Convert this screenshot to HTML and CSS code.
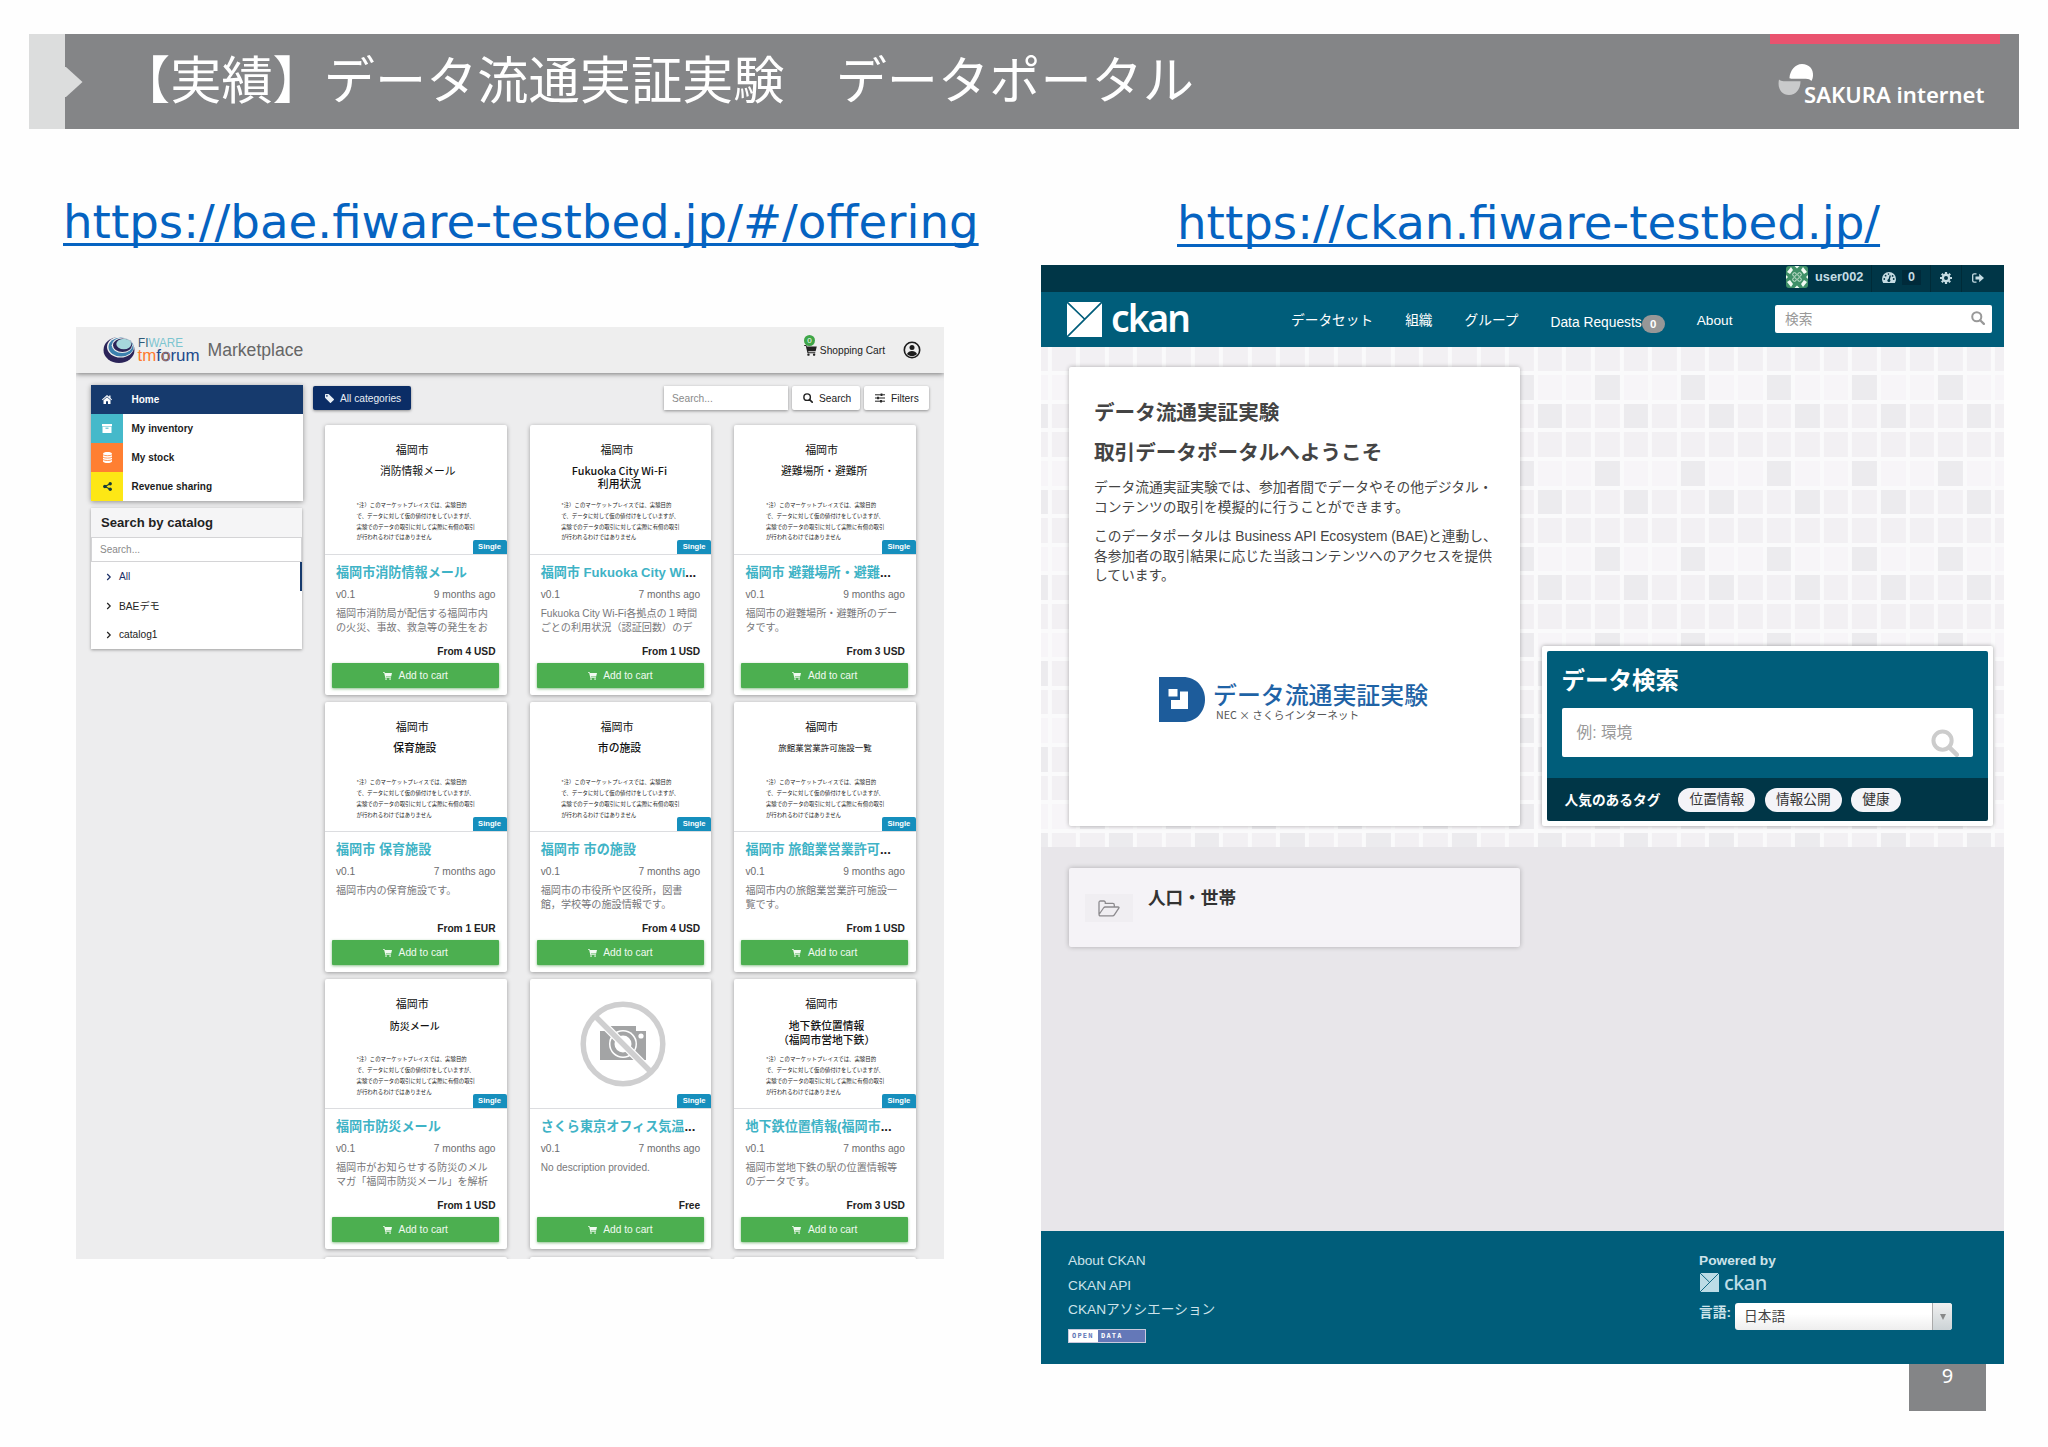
FILE: index.html
```html
<!DOCTYPE html>
<html lang="en">

<head>
    <meta charset="UTF-8" />
    <meta name="viewport" content="width=device-width, initial-scale=1" />
    <title>データ流通実証実験 データポータル</title>
    <link rel="stylesheet" href="styles.css">
</head>

<body>
    <!-- Shared icons -->
    <svg class="sprite" width="0" height="0">
        <symbol id="i-cart" viewBox="0 0 16 14">
            <path d="M0 0h2.8l.5 1.8H16l-1.5 6H5.1l.3 1.3h8.7v1.3H4.2L2 1.3H0z" fill="currentColor" />
            <circle cx="5.4" cy="12.3" r="1.5" fill="currentColor" />
            <circle cx="12.6" cy="12.3" r="1.5" fill="currentColor" />
        </symbol>
        <symbol id="i-search" viewBox="0 0 16 16">
            <circle cx="6.6" cy="6.6" r="5.2" fill="none" stroke="currentColor" stroke-width="2.3" />
            <path d="M10.5 10.5l4.2 4.2" stroke="currentColor" stroke-width="2.6" stroke-linecap="round" />
        </symbol>
        <symbol id="i-chevron" viewBox="0 0 6 8">
            <path d="M1.2 1l3 3-3 3" fill="none" stroke="currentColor" stroke-width="1.2" />
        </symbol>
        <symbol id="i-ckan" viewBox="0 0 36 36">
            <path d="M0 0h36v36H0z" fill="currentColor" />
            <path d="M0 0l18 17.500M36 0L0 36" fill="none" stroke="#005d7a" stroke-width="1.700" />
        </symbol>
    </svg>

    <header class="slide-header">
        <div class="tab"></div>
        <svg class="arrow" width="18" height="30" viewBox="0 0 18 30"><path d="M0 0h1l16.500 15L1 30H0z" fill="#dcdddd" /></svg>
        <h1>【実績】データ流通実証実験　データポータル</h1>
        <div class="brand">
            <div class="brand-bar"></div>
            <div class="brand-logo">
                <svg width="36" height="33" viewBox="0 0 36 33">
                    <path d="M11.500 13.500C12 7 17 0 24 0c7 0 11.500 5 11 11.500-.1 2-.6 4-1.600 5.500-1.500-1.600-3-2.300-5.500-2.300H13c-1 0-1.600-.4-1.500-1.200z" fill="#fff" />
                    <path d="M1 15.500c1.300 1.300 2.700 1.700 4.500 1.700h17C22.500 25 18 31 11 31 4 31-1 25 1 15.500z" fill="#c9cacb" />
                </svg>
                <span>SAKURA internet</span>
            </div>
        </div>
    </header>

    <main class="slide-body">
        <section class="col-left">
            <a class="url" href="#">https://bae.fiware-testbed.jp/#/offering</a>

            <div class="market">
                <header class="market-header">
                    <svg class="market-logo" width="98" height="28" viewBox="0 0 98 28">
                        <ellipse cx="16" cy="14" rx="15.500" ry="13" fill="#2b2459" />
                        <ellipse cx="17.500" cy="11" rx="13.500" ry="10.500" fill="#eee" />
                        <ellipse cx="18" cy="11" rx="12.500" ry="9.500" fill="#3c80ae" />
                        <ellipse cx="19.200" cy="9.300" rx="10.500" ry="7.600" fill="#eee" />
                        <ellipse cx="19.500" cy="9.300" rx="9.500" ry="6.700" fill="#2b2459" />
                        <ellipse cx="20.800" cy="8" rx="7.500" ry="5.200" fill="#a6d8dc" />
                        <text x="35" y="10.500" font-size="13" textLength="45" lengthAdjust="spacingAndGlyphs"><tspan fill="#2d5b7a">FI</tspan><tspan fill="#7cc5d0">WARE</tspan></text>
                        <text x="34.500" y="25" font-size="16.500" textLength="62" lengthAdjust="spacingAndGlyphs"><tspan fill="#ff7a2f">tm</tspan><tspan fill="#214a8c">f</tspan><tspan fill="#ff7a2f" stroke="#214a8c" stroke-width=".6">o</tspan><tspan fill="#214a8c">rum</tspan></text>
                    </svg>
                    <span class="market-name">Marketplace</span>
                    <span class="cart-link">
                        <svg width="13" height="11"><use href="#i-cart" /></svg>
                        <i>0</i>
                        Shopping Cart
                    </span>
                    <svg class="user" width="18" height="18" viewBox="0 0 18 18">
                        <circle cx="9" cy="9" r="7.700" fill="none" stroke="#1c1c1c" stroke-width="1.600" />
                        <circle cx="9" cy="6.600" r="2.500" fill="#1c1c1c" />
                        <path d="M4 13c.8-2 2.800-3 5-3s4.200 1 5 3c-1.300 1.400-3 2.200-5 2.200S5.300 14.400 4 13z" fill="#1c1c1c" />
                    </svg>
                </header>

                <div class="market-body">
                    <aside class="side">
                        <ul class="menu">
                            <li class="active"><span class="ic"><svg width="10" height="9" viewBox="0 0 10 9"><path d="M5 0L0 4.500l.6.700L5 1.400l4.400 3.800.6-.7L8.500 3V.6H7.200v1.200zM1.500 5.300V9H4V6.300h2V9h2.500V5.300L5 2.300z" fill="currentColor" /></svg></span>Home</li>
                            <li><span class="ic teal"><svg width="10" height="9" viewBox="0 0 10 9"><path d="M0 0h10v2.200H0zM.5 2.800h9V9h-9z" fill="currentColor" /><path d="M3.500 4.200h3" stroke="#45b9ca" /></svg></span>My inventory</li>
                            <li><span class="ic orange"><svg width="9" height="11" viewBox="0 0 9 11"><path d="M0 1.500C0 .6 2 0 4.500 0S9 .6 9 1.500v8c0 .9-2 1.500-4.500 1.500S0 10.400 0 9.500z" fill="currentColor" /><path d="M0 2.800c1.500 1.200 7.500 1.200 9 0M0 5.200c1.500 1.200 7.500 1.200 9 0M0 7.600c1.500 1.200 7.500 1.200 9 0" fill="none" stroke="#ff7f32" stroke-width=".8" /></svg></span>My stock</li>
                            <li><span class="ic yellow"><svg width="9" height="9" viewBox="0 0 9 9"><path d="M7.200 1.800L2 4.500l5.200 2.700" fill="none" stroke="currentColor" stroke-width="1.100" /><circle cx="7.200" cy="1.800" r="1.700" fill="currentColor" /><circle cx="1.900" cy="4.500" r="1.800" fill="currentColor" /><circle cx="7.200" cy="7.200" r="1.700" fill="currentColor" /></svg></span>Revenue sharing</li>
                        </ul>
                        <div class="catalog">
                            <h2>Search by catalog</h2>
                            <div class="catalog-search">Search...</div>
                            <ul>
                                <li class="active"><svg width="6" height="8"><use href="#i-chevron" /></svg>All</li>
                                <li><svg width="6" height="8"><use href="#i-chevron" /></svg>BAEデモ</li>
                                <li><svg width="6" height="8"><use href="#i-chevron" /></svg>catalog1</li>
                            </ul>
                        </div>
                    </aside>

                    <div class="offers">
                        <div class="toolbar">
                            <span class="btn-cat"><svg width="9" height="9" viewBox="0 0 9 9"><path d="M0 .6C0 .2.2 0 .6 0h3l5.200 5c.3.300.3.600 0 .900L5.900 8.800c-.3.300-.6.300-.9 0L0 3.700z" fill="currentColor" /><circle cx="1.900" cy="1.900" r=".8" fill="#0b2d66" /></svg>All categories</span>
                            <span class="field">Search...</span>
                            <span class="btn"><svg width="10" height="10"><use href="#i-search" /></svg>Search</span>
                            <span class="btn filters"><svg width="10" height="10" viewBox="0 0 10 10"><path d="M0 1.800h10M0 5h10M0 8.200h10" stroke="currentColor" /><path d="M6.500.5v2.600M3 3.700v2.600M6 6.900v2.600" stroke="currentColor" stroke-width="1.800" /></svg>Filters</span>
                        </div>

                        <div class="cards">
                            <article class="card">
                                <div class="thumb"><p class="city">福岡市</p><p class="name off">消防情報メール</p><p class="note">*注）このマーケットプレイスでは、実験目的<br>で、データに対して仮の値付けをしていますが、<br>実験でのデータの取引に対して実際に有償の取引<br>が行われるわけではありません</p><b class="tag">Single</b></div>
                                <h3><a>福岡市消防情報メール</a></h3>
                                <div class="meta"><span>v0.1</span><span>9 months ago</span></div>
                                <p class="desc">福岡市消防局が配信する福岡市内<br>の火災、事故、救急等の発生をお</p>
                                <p class="price">From 4 USD</p>
                                <div class="add"><svg width="9" height="8"><use href="#i-cart" /></svg>Add to cart</div>
                            </article>
                            <article class="card">
                                <div class="thumb"><p class="city">福岡市</p><p class="name bold">Fukuoka City Wi-Fi<br>利用状況</p><p class="note">*注）このマーケットプレイスでは、実験目的<br>で、データに対して仮の値付けをしていますが、<br>実験でのデータの取引に対して実際に有償の取引<br>が行われるわけではありません</p><b class="tag">Single</b></div>
                                <h3><a>福岡市 Fukuoka City Wi</a>...</h3>
                                <div class="meta"><span>v0.1</span><span>7 months ago</span></div>
                                <p class="desc">Fukuoka City Wi-Fi各拠点の１時間<br>ごとの利用状況（認証回数）のデ</p>
                                <p class="price">From 1 USD</p>
                                <div class="add"><svg width="9" height="8"><use href="#i-cart" /></svg>Add to cart</div>
                            </article>
                            <article class="card">
                                <div class="thumb"><p class="city">福岡市</p><p class="name">避難場所・避難所</p><p class="note">*注）このマーケットプレイスでは、実験目的<br>で、データに対して仮の値付けをしていますが、<br>実験でのデータの取引に対して実際に有償の取引<br>が行われるわけではありません</p><b class="tag">Single</b></div>
                                <h3><a>福岡市 避難場所・避難</a>...</h3>
                                <div class="meta"><span>v0.1</span><span>9 months ago</span></div>
                                <p class="desc">福岡市の避難場所・避難所のデー<br>タです。</p>
                                <p class="price">From 3 USD</p>
                                <div class="add"><svg width="9" height="8"><use href="#i-cart" /></svg>Add to cart</div>
                            </article>

                            <article class="card">
                                <div class="thumb"><p class="city">福岡市</p><p class="name bold">保育施設</p><p class="note">*注）このマーケットプレイスでは、実験目的<br>で、データに対して仮の値付けをしていますが、<br>実験でのデータの取引に対して実際に有償の取引<br>が行われるわけではありません</p><b class="tag">Single</b></div>
                                <h3><a>福岡市 保育施設</a></h3>
                                <div class="meta"><span>v0.1</span><span>7 months ago</span></div>
                                <p class="desc">福岡市内の保育施設です。</p>
                                <p class="price">From 1 EUR</p>
                                <div class="add"><svg width="9" height="8"><use href="#i-cart" /></svg>Add to cart</div>
                            </article>
                            <article class="card">
                                <div class="thumb"><p class="city">福岡市</p><p class="name bold">市の施設</p><p class="note">*注）このマーケットプレイスでは、実験目的<br>で、データに対して仮の値付けをしていますが、<br>実験でのデータの取引に対して実際に有償の取引<br>が行われるわけではありません</p><b class="tag">Single</b></div>
                                <h3><a>福岡市 市の施設</a></h3>
                                <div class="meta"><span>v0.1</span><span>7 months ago</span></div>
                                <p class="desc">福岡市の市役所や区役所，図書<br>館，学校等の施設情報です。</p>
                                <p class="price">From 4 USD</p>
                                <div class="add"><svg width="9" height="8"><use href="#i-cart" /></svg>Add to cart</div>
                            </article>
                            <article class="card">
                                <div class="thumb"><p class="city">福岡市</p><p class="name small">旅館業営業許可施設一覧</p><p class="note">*注）このマーケットプレイスでは、実験目的<br>で、データに対して仮の値付けをしていますが、<br>実験でのデータの取引に対して実際に有償の取引<br>が行われるわけではありません</p><b class="tag">Single</b></div>
                                <h3><a>福岡市 旅館業営業許可</a>...</h3>
                                <div class="meta"><span>v0.1</span><span>9 months ago</span></div>
                                <p class="desc">福岡市内の旅館業営業許可施設一<br>覧です。</p>
                                <p class="price">From 1 USD</p>
                                <div class="add"><svg width="9" height="8"><use href="#i-cart" /></svg>Add to cart</div>
                            </article>

                            <article class="card">
                                <div class="thumb"><p class="city">福岡市</p><p class="name medium">防災メール</p><p class="note">*注）このマーケットプレイスでは、実験目的<br>で、データに対して仮の値付けをしていますが、<br>実験でのデータの取引に対して実際に有償の取引<br>が行われるわけではありません</p><b class="tag">Single</b></div>
                                <h3><a>福岡市防災メール</a></h3>
                                <div class="meta"><span>v0.1</span><span>7 months ago</span></div>
                                <p class="desc">福岡市がお知らせする防災のメル<br>マガ「福岡市防災メール」を解析</p>
                                <p class="price">From 1 USD</p>
                                <div class="add"><svg width="9" height="8"><use href="#i-cart" /></svg>Add to cart</div>
                            </article>
                            <article class="card">
                                <div class="thumb noimg">
                                    <svg width="86" height="86" viewBox="0 0 86 86">
                                        <path d="M20 30h7V25h20l2 0h7v5h10v29H20z" fill="#a3a4a5" />
                                        <circle cx="61" cy="35" r="2.600" fill="#fff" />
                                        <circle cx="43" cy="43" r="14" fill="#fff" />
                                        <circle cx="43" cy="43" r="10.500" fill="none" stroke="#a3a4a5" stroke-width="4" />
                                        <path d="M15 15l56 56" stroke="#fff" stroke-width="8" />
                                        <path d="M15 15l56 56" stroke="#cfcfd0" stroke-width="5.500" />
                                        <circle cx="43" cy="43" r="39.800" fill="none" stroke="#cfcfd0" stroke-width="5.500" />
                                    </svg>
                                    <b class="tag">Single</b>
                                </div>
                                <h3><a>さくら東京オフィス気温</a>...</h3>
                                <div class="meta"><span>v0.1</span><span>7 months ago</span></div>
                                <p class="desc">No description provided.</p>
                                <p class="price">Free</p>
                                <div class="add"><svg width="9" height="8"><use href="#i-cart" /></svg>Add to cart</div>
                            </article>
                            <article class="card">
                                <div class="thumb"><p class="city">福岡市</p><p class="name bold two">地下鉄位置情報<br>（福岡市営地下鉄）</p><p class="note">*注）このマーケットプレイスでは、実験目的<br>で、データに対して仮の値付けをしていますが、<br>実験でのデータの取引に対して実際に有償の取引<br>が行われるわけではありません</p><b class="tag">Single</b></div>
                                <h3><a>地下鉄位置情報(福岡市</a>...</h3>
                                <div class="meta"><span>v0.1</span><span>7 months ago</span></div>
                                <p class="desc">福岡市営地下鉄の駅の位置情報等<br>のデータです。</p>
                                <p class="price">From 3 USD</p>
                                <div class="add"><svg width="9" height="8"><use href="#i-cart" /></svg>Add to cart</div>
                            </article>

                            <div class="card"></div>
                            <div class="card"></div>
                            <div class="card"></div>
                        </div>
                    </div>
                </div>
            </div>
        </section>

        <section class="col-right">
            <a class="url" href="#">https://ckan.fiware-testbed.jp/</a>

            <div class="ckan">
                <div class="account">
                    <svg class="avatar" width="22" height="22" viewBox="0 0 22 22">
                        <rect width="22" height="22" rx="3" fill="#3f9068" />
                        <path d="M1 6l4-5 2 3-3 4zM21 6l-4-5-2 3 3 4zM1 16l4 5 2-3-3-4zM21 16l-4 5-2-3 3-4zM8.500 0h5L11 2.500zM8.500 22h5L11 19.500zM0 9l2 2-2 2zM22 9l-2 2 2 2z" fill="#f2fbf4" />
                        <g fill="none" stroke="#cfe8d6"><circle cx="8.500" cy="8.500" r="1.800" /><circle cx="13.500" cy="8.500" r="1.800" /><circle cx="8.500" cy="13.500" r="1.800" /><circle cx="13.500" cy="13.500" r="1.800" /></g>
                    </svg>
                    <b class="username">user002</b>
                    <span class="acc dash">
                        <svg width="14" height="11" viewBox="0 0 14 11"><path d="M0 7a7 7 0 0 1 14 0c0 1.500-.4 2.800-1.200 4H1.200C.4 9.800 0 8.500 0 7z" fill="currentColor" /><path d="M6.800 8.500L8.300 3.500" stroke="#003647" stroke-width="1.300" /><g fill="#003647"><circle cx="2.300" cy="7" r=".9" /><circle cx="3.600" cy="3.700" r=".9" /><circle cx="6.500" cy="2.100" r=".8" /><circle cx="10.600" cy="3.900" r=".9" /><circle cx="11.700" cy="7" r=".9" /><circle cx="6.900" cy="8.500" r="1.500" /></g></svg>
                        <b>0</b>
                    </span>
                    <span class="acc"><svg width="12" height="12" viewBox="0 0 12 12"><circle cx="6" cy="6" r="3.200" fill="none" stroke="currentColor" stroke-width="2.400" /><path d="M6 0v2M6 10v2M0 6h2M10 6h2M1.800 1.800l1.400 1.400M8.800 8.800l1.400 1.400M1.800 10.200l1.400-1.400M8.800 3.200l1.400-1.400" stroke="currentColor" stroke-width="2.200" /></svg></span>
                    <span class="acc out"><svg width="12" height="10" viewBox="0 0 12 10"><path d="M4.500.8H2.200C1.300.8.700 1.400.7 2.200v5.600c0 .8.6 1.400 1.500 1.400h2.300" fill="none" stroke="currentColor" stroke-width="1.300" /><path d="M3.500 3.400h3.700V.8L12 5 7.200 9.200V6.600H3.500z" fill="currentColor" /></svg></span>
                </div>

                <nav class="masthead">
                    <svg class="mark" width="35" height="35"><use href="#i-ckan" /></svg>
                    <span class="wordmark">ckan</span>
                    <ul>
                        <li>データセット</li>
                        <li>組織</li>
                        <li>グループ</li>
                        <li class="req">Data Requests<b>0</b></li>
                        <li>About</li>
                    </ul>
                    <div class="site-search">検索<svg width="14" height="14"><use href="#i-search" /></svg></div>
                </nav>

                <div class="hero">
                    <div class="welcome">
                        <h2>データ流通実証実験</h2>
                        <h2>取引データポータルへようこそ</h2>
                        <p>データ流通実証実験では、参加者間でデータやその他デジタル・<br>コンテンツの取引を模擬的に行うことができます。</p>
                        <p>このデータポータルは Business API Ecosystem (BAE)と連動し、<br>各参加者の取引結果に応じた当該コンテンツへのアクセスを提供<br>しています。</p>
                        <div class="project">
                            <svg width="46" height="45" viewBox="0 0 46 45">
                                <path d="M0 0h24c13 0 22 10 22 22.500S37 45 24 45H0z" fill="#1d5c9b" />
                                <path d="M9.500 12h9v7.500h-9zM21 14.500h8V32H12V23h9z" fill="#fff" />
                            </svg>
                            <div>
                                <strong>データ流通実証実験</strong>
                                <small>NEC × さくらインターネット</small>
                            </div>
                        </div>
                    </div>
                    <div class="data-search">
                        <div class="top">
                            <h3>データ検索</h3>
                            <div class="big-field">例: 環境<svg width="28" height="28"><use href="#i-search" /></svg></div>
                        </div>
                        <div class="tags"><b>人気のあるタグ</b><span>位置情報</span><span>情報公開</span><span>健康</span></div>
                    </div>
                </div>

                <div class="groups">
                    <div class="group">
                        <span class="folder"><svg width="22" height="17" viewBox="0 0 22 17"><path d="M1 14V2.500C1 1.600 1.600 1 2.500 1h3.300c.9 0 1.500.6 1.500 1.500v.9h7.500c.9 0 1.500.6 1.500 1.500V7M1 14.500L5.500 8c.5-.7 1-1 1.800-1H20c1 0 1.300.5.8 1.200l-4.300 6.400c-.5.800-1.100 1.200-2 1.200H2.300C1.500 15.800 1 15.300 1 14.500z" fill="none" stroke="#8c8a8e" stroke-width="1.300" /></svg></span>
                        <b>人口・世帯</b>
                    </div>
                </div>

                <footer class="ckan-footer">
                    <div class="links">
                        <a>About CKAN</a>
                        <a>CKAN API</a>
                        <a>CKANアソシエーション</a>
                        <div class="opendata"><span>OPEN</span><span>DATA</span></div>
                    </div>
                    <div class="powered">
                        <b>Powered by</b>
                        <div class="powered-logo"><svg width="19" height="19"><use href="#i-ckan" /></svg><span>ckan</span></div>
                        <div class="lang"><b>言語:</b><div class="select">日本語<i><svg width="6" height="6" viewBox="0 0 6 6"><path d="M0 0h6L3 6z" fill="#888" /></svg></i></div></div>
                    </div>
                </footer>
            </div>
            <div class="page-no">9</div>
        </section>
    </main>
</body>

</html>
```
FILE: styles.css
```css
* {
    box-sizing: border-box;
    margin: 0;
    padding: 0;
}

body {
    width: 2048px;
    height: 1447px;
    overflow: hidden;
    background: #fefefe;
    color: #222;
    font-family: "Liberation Sans", "Noto Sans CJK JP", sans-serif;
}

ul {
    list-style: none;
}

svg {
    flex-shrink: 0;
}

.sprite {
    position: absolute;
}

/* Slide header */
.slide-header {
    display: flex;
    align-items: center;
    height: 95px;
    margin: 34px 29px 0;
    background: #848587;
}

.tab {
    width: 36px;
    height: 100%;
    background: #dcdddd;
}

.slide-header h1 {
    flex: 1;
    margin-left: 36px;
    padding-bottom: 9px;
    font: 400 51.200px/70px "Noto Sans CJK JP", sans-serif;
    color: #fff;
    white-space: nowrap;
}

.brand {
    align-self: stretch;
    width: 230px;
    margin-right: 19px;
}

.brand-bar {
    height: 10px;
    background: #ea536f;
}

.brand-logo {
    display: flex;
    margin: 20px 0 0 8px;
}

.brand-logo span {
    margin: 16px 0 0 -10px;
    font: 600 22.100px/28px "Noto Sans", sans-serif;
    color: #fff;
    white-space: nowrap;
}

/* Slide body */
.slide-body {
    display: flex;
}

.col-left {
    width: 1041px;
    padding: 61px 0 0 63px;
}

.url {
    display: block;
    height: 70px;
    font: 400 46.700px/64px "DejaVu Sans", sans-serif;
    color: #0563c1;
    text-decoration: underline;
    text-decoration-thickness: 3px;
    text-underline-offset: 5px;
    text-decoration-skip-ink: none;
    white-space: nowrap;
}

/* Marketplace */
.market {
    width: 868px;
    height: 932px;
    margin: 67px 0 0 13px;
    overflow: hidden;
    background: #ededee;
    font-size: 10.200px;
}

.market-header {
    display: flex;
    align-items: center;
    position: relative;
    height: 46px;
    padding: 0 23px 0 27px;
    background: #eee;
    box-shadow: 0 1px 5px rgba(0, 0, 0, .5);
}

.market-name {
    margin-left: 6.500px;
    padding-top: 1px;
    font-size: 17.600px;
    color: #666;
}

.cart-link {
    display: flex;
    align-items: center;
    gap: 3px;
    position: relative;
    margin-left: auto;
}

.cart-link i {
    position: absolute;
    left: 0;
    top: -10px;
    width: 11px;
    height: 11px;
    border-radius: 50%;
    background: #3fa648;
    color: #fff;
    font: 400 8px/11px "Liberation Sans", sans-serif;
    text-align: center;
}

.user {
    margin-left: 18px;
}

.market-body {
    display: flex;
    align-items: flex-start;
    padding: 12px 15px 0 15px;
}

.side {
    width: 212px;
}

.menu {
    background: #fff;
    box-shadow: 0 1px 5px rgba(0, 0, 0, .4);
}

.menu li {
    display: flex;
    align-items: center;
    height: 29px;
    font-weight: bold;
    font-size: 10px;
    color: #1c1c1c;
}

.menu .active {
    background: #163a6d;
    color: #fff;
}

.ic {
    display: flex;
    align-items: center;
    justify-content: center;
    width: 32px;
    height: 29px;
    margin-right: 8.500px;
    color: #fff;
}

.teal {
    background: #45b9ca;
}

.orange {
    background: #ff7f32;
}

.yellow {
    background: #fde715;
    color: #143a3a;
}

.catalog {
    width: 211px;
    margin-top: 7px;
    background: #fff;
    box-shadow: 0 1px 3px rgba(0, 0, 0, .35);
}

.catalog h2 {
    height: 29px;
    padding-left: 10px;
    background: #f5f5f6;
    font-size: 13.100px;
    line-height: 30px;
}

.catalog-search {
    height: 25px;
    padding-left: 8px;
    border: 1px solid #d4d4d6;
    font-size: 10px;
    line-height: 23px;
    color: #8a8a8a;
}

.catalog li {
    display: flex;
    align-items: center;
    gap: 7px;
    height: 29px;
    padding-left: 15px;
}

.catalog .active {
    color: #1b2f66;
    border-right: 2px solid #163a6d;
}

.offers {
    flex: 1;
    padding: 1px 0 0 10px;
}

.toolbar {
    display: flex;
    height: 24px;
}

.toolbar > span {
    display: flex;
    align-items: center;
    background: #fff;
    box-shadow: 0 1px 3px rgba(0, 0, 0, .4);
}

.toolbar .btn-cat {
    width: 98px;
    gap: 6px;
    padding-left: 12px;
    margin-right: auto;
    border-radius: 2px;
    background: #0b2d66;
    color: #e8eef5;
}

.toolbar .field {
    width: 124px;
    padding-left: 8px;
    color: #8a8a8a;
}

.toolbar .btn {
    width: 68px;
    gap: 6px;
    margin-left: 4px;
    padding-left: 11px;
    border-radius: 2px;
}

.toolbar .filters {
    width: 65px;
}

.cards {
    display: grid;
    grid-template-columns: repeat(3, 181.500px);
    grid-auto-rows: 270px;
    gap: 7.200px 23.200px;
    padding: 15px 0 0 12px;
}

.card {
    border-radius: 2px;
    background: #fff;
    box-shadow: 0 1px 4px rgba(0, 0, 0, .35);
}

.thumb {
    position: relative;
    height: 130px;
    padding-top: 17px;
    border-bottom: 1px solid #dcdde0;
    font-family: "Noto Sans CJK JP", sans-serif;
    color: #111;
}

.city {
    padding-right: 7px;
    font-size: 11px;
    line-height: 14px;
    text-align: center;
}

.name {
    height: 36px;
    margin-top: 8px;
    padding-right: 2px;
    font-size: 10.800px;
    line-height: 13px;
    text-align: center;
    white-space: nowrap;
}

.off {
    padding: 0 0 0 4px;
}

.bold,
.medium {
    font-weight: 500;
}

.medium {
    padding-top: 1px;
    font-size: 10px;
}

.small {
    padding: 0;
    font-size: 8.500px;
}

.two {
    padding: 0 0 0 3px;
    line-height: 14px;
}

.note {
    padding-left: 31.500px;
    font-size: 5.400px;
    line-height: 10.800px;
    white-space: nowrap;
    color: #222;
}

.tag {
    position: absolute;
    right: 0;
    bottom: 0;
    width: 34px;
    height: 14px;
    border-radius: 2px 2px 0 0;
    background: #168fbd;
    color: #fff;
    font: bold 7.600px/14px "Liberation Sans", sans-serif;
    text-align: center;
}

.noimg {
    padding: 22px 0 0 50px;
}

.card h3 {
    padding: 9px 0 0 11px;
    font-size: 13.100px;
    line-height: 18px;
    white-space: nowrap;
}

.card h3 a {
    color: #3fb3c6;
}

.meta {
    display: flex;
    justify-content: space-between;
    padding: 6px 11px 0;
    line-height: 14px;
    color: #6c6c6e;
}

.desc {
    height: 33.500px;
    padding: 4.500px 0 0 11px;
    font-size: 10.150px;
    line-height: 14.400px;
    white-space: nowrap;
    color: #77777a;
}

.price {
    padding: 9px 11px 0 0;
    font-weight: bold;
    line-height: 14px;
    text-align: right;
}

.add {
    display: flex;
    align-items: center;
    justify-content: center;
    gap: 6.500px;
    height: 25px;
    margin: 4.500px 7.500px 0 7px;
    border-radius: 1px;
    background: #4caf50;
    box-shadow: 0 1px 3px rgba(60, 150, 60, .6);
    color: #f1faf1;
}

/* CKAN */
.col-right {
    width: 963px;
    padding-top: 62px;
}

.col-right .url {
    height: 74px;
    padding-left: 136px;
}

.ckan {
    height: 1099px;
    font-size: 13.700px;
}

.account {
    display: flex;
    justify-content: flex-end;
    height: 27px;
    background: #003647;
    color: #c5dce3;
}

.avatar {
    margin-top: 1px;
}

.username {
    width: 63px;
    padding-left: 7px;
    font-size: 12.800px;
    line-height: 24px;
}

.acc {
    display: flex;
    align-items: center;
    width: 31px;
    padding: 0 0 2px 9px;
    border-left: 1px solid #002b38;
}

.dash {
    width: 59px;
    gap: 6px;
    padding-left: 10px;
}

.dash b {
    width: 19px;
    height: 15px;
    background: #002a3a;
    font-size: 12.500px;
    line-height: 15px;
    text-align: center;
}

.out {
    width: 43px;
    padding-left: 10px;
}

.masthead {
    display: flex;
    align-items: flex-start;
    height: 54.500px;
    padding: 0 12px 0 26px;
    background: #005d7a;
    color: #fff;
}

.mark {
    margin-top: 10px;
}

.wordmark {
    width: 180px;
    margin: 1px 0 0 9px;
    font: 600 37px/50px "Noto Sans", sans-serif;
    letter-spacing: -1.900px;
}

.masthead ul {
    display: flex;
    line-height: 57px;
}

.masthead li {
    margin-right: 32px;
    white-space: nowrap;
}

.masthead .req {
    display: flex;
    align-items: center;
    font-size: 13.800px;
    line-height: 61px;
}

.req b {
    width: 23px;
    height: 18px;
    margin-top: 3px;
    border-radius: 9px;
    background: #979797;
    font-size: 11.500px;
    line-height: 18px;
    text-align: center;
}

.site-search {
    display: flex;
    align-items: center;
    justify-content: space-between;
    width: 217px;
    height: 27.500px;
    margin: 13px 0 0 auto;
    padding: 0 7px 1px 10px;
    border-radius: 2px;
    background: #fff;
    color: #999;
}

.hero {
    display: flex;
    justify-content: space-between;
    align-items: flex-end;
    height: 500.500px;
    padding: 0 11px 21px 28px;
    background-color: #f2f0f3;
    /* white joints, then two darker squares and a lighter row on a 3x3 repeat */
    background-image:
        repeating-linear-gradient(90deg, #fafafb 0 4px, transparent 4px 28.600px),
        repeating-linear-gradient(180deg, #fafafb 0 4px, transparent 4px 28.600px),
        conic-gradient(from 0deg at 28.600px 28.600px, transparent 0 270deg, #ecebee 270deg),
        conic-gradient(from 0deg at 28.600px 28.600px, transparent 0 270deg, #ecebee 270deg),
        linear-gradient(180deg, #f7f5f8 0 28.600px, transparent 28.600px);
    background-size: 2002px 100%, 100% 858px, 85.800px 85.800px, 85.800px 85.800px, 85.800px 85.800px;
    background-position: -22.100px 0, 0 -4.400px, 37px 26px, 66px 54.600px, 0 26px;
}

.welcome {
    width: 451px;
    height: 459px;
    padding: 26px 0 0 25px;
    border-radius: 2px;
    background: #fff;
    box-shadow: 0 0 4px rgba(0, 0, 0, .3);
    color: #444;
    white-space: nowrap;
}

.welcome h2 {
    font-size: 20.600px;
    line-height: 40px;
}

.welcome p {
    padding: 5px 0;
    font-size: 13.750px;
    line-height: 19.600px;
}

.project {
    display: flex;
    gap: 8px;
    padding: 86px 0 0 65px;
}

.project strong {
    display: block;
    font: 500 23.900px/33px "Noto Sans CJK JP", sans-serif;
    color: #1f63a6;
}

.project small {
    display: block;
    margin: -3px 0 0 3px;
    font: 400 10.700px/15px "Noto Sans CJK JP", sans-serif;
    color: #555;
}

.data-search {
    width: 451.500px;
    height: 180.500px;
    padding: 5px;
    border-radius: 2px;
    background: #fff;
    box-shadow: 0 0 4px rgba(0, 0, 0, .35);
}

.top {
    height: 127.500px;
    padding: 14px 15px 0 15px;
    border-radius: 2px 2px 0 0;
    background: #005d7a;
}

.top h3 {
    font-size: 23.500px;
    line-height: 32px;
    color: #fff;
}

.big-field {
    display: flex;
    justify-content: space-between;
    height: 49px;
    margin-top: 11px;
    padding: 0 14px 0 15px;
    border-radius: 2px;
    background: #fff;
    font-size: 15.700px;
    line-height: 50px;
    color: #999;
}

.big-field svg {
    margin-top: 21px;
    color: #ccc;
}

.tags {
    display: flex;
    align-items: center;
    height: 43px;
    padding: 0 0 0 18px;
    border-radius: 0 0 2px 2px;
    background: #003647;
    white-space: nowrap;
}

.tags b {
    width: 104.500px;
    padding-bottom: 1px;
    color: #fff;
}

.tags span {
    margin-left: 9.300px;
    padding: 0 11.200px;
    border-radius: 12px;
    background: #f4f4f8;
    line-height: 24px;
    color: #333;
}

.groups {
    height: 384px;
    padding: 21px 0 0 28px;
    background: #e8e6ea;
}

.group {
    display: flex;
    width: 451px;
    height: 79px;
    padding: 17px 16px;
    border-radius: 2px;
    background: #f5f3f7;
    box-shadow: 0 0 5px rgba(0, 0, 0, .25);
}

.folder {
    display: flex;
    align-items: center;
    justify-content: center;
    width: 48px;
    height: 28px;
    margin-top: 9px;
    background: #f0eef2;
}

.group b {
    margin-left: 15px;
    font-size: 17.600px;
    line-height: 27px;
    color: #333;
}

.ckan-footer {
    display: flex;
    justify-content: space-between;
    height: 133px;
    padding: 18px 52px 0 27px;
    background: #005d7a;
    color: #cde3ea;
}

.links a {
    display: block;
    line-height: 24.500px;
}

.opendata {
    display: flex;
    width: 78px;
    height: 14px;
    margin-top: 6.500px;
    border: 1px solid #c9c9dd;
    background: #6478b8;
    color: #fff;
    font: bold 7px/12px "DejaVu Sans Mono", monospace;
    letter-spacing: 1.200px;
}

.opendata span {
    width: 29px;
    padding-left: 3px;
}

.opendata span:first-child {
    background: #fff;
    color: #6478b8;
}

.powered {
    width: 253px;
}

.powered > b {
    display: block;
    line-height: 24px;
}

.powered-logo {
    display: flex;
    gap: 5px;
    height: 30px;
    padding-left: 1px;
    color: #bcdce6;
}

.powered-logo span {
    font: 500 20px/19px "Noto Sans", sans-serif;
    letter-spacing: -.6px;
}

.lang {
    display: flex;
    justify-content: space-between;
    line-height: 20px;
}

.select {
    display: flex;
    justify-content: space-between;
    width: 217px;
    height: 27px;
    padding-left: 9px;
    overflow: hidden;
    border-radius: 3px;
    background: linear-gradient(#fff 40%, #eee);
    line-height: 28px;
    color: #444;
}

.select i {
    display: flex;
    align-items: center;
    justify-content: center;
    width: 20px;
    border-left: 1px solid #aaa;
    background: linear-gradient(#f0f0f0, #ccd3d6);
}

.page-no {
    width: 77px;
    height: 47px;
    margin-left: 868px;
    background: #848587;
    color: #fff;
    font: 400 20px/24px "Noto Sans", sans-serif;
    text-align: center;
}
```
